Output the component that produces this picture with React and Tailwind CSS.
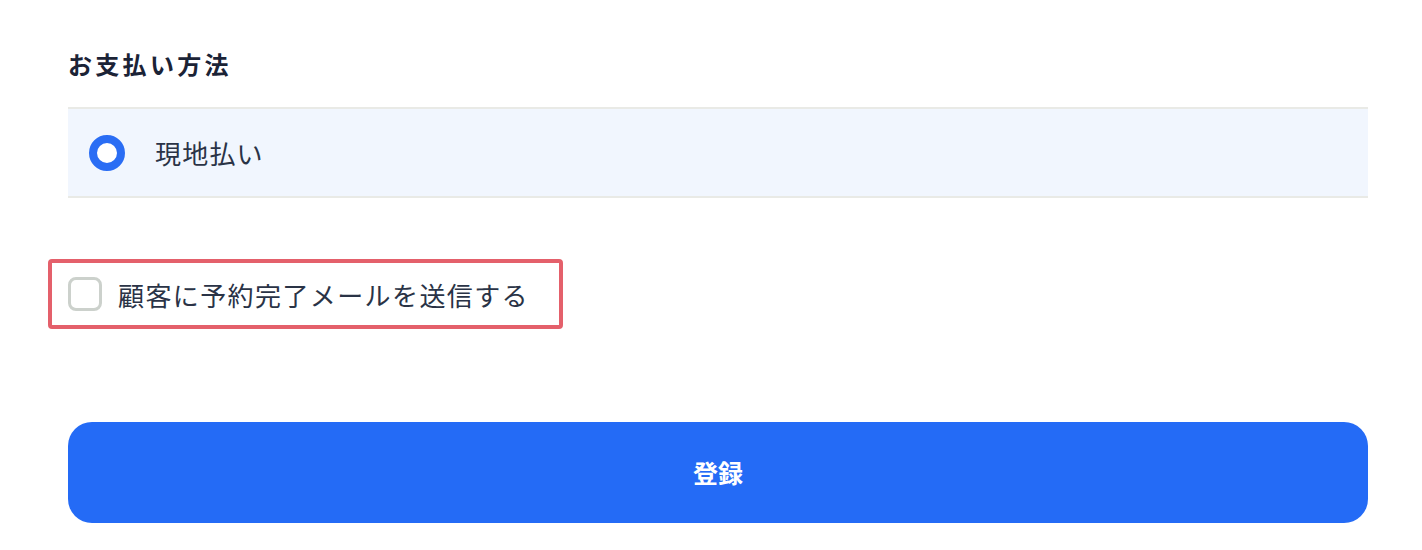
export default function App() {
  return (
    <div className="min-h-[550px] bg-white" style={{ fontFamily: '"Noto Sans CJK JP", "Noto Sans", sans-serif' }}>
      <div className="ml-[68px] w-[1300px] pt-[44px]">
        <h3 className="text-[24px] font-bold leading-[40px] tracking-[3.3px] text-[#1b2336]">お支払い方法</h3>
        <div className="mt-[23px] flex h-[91px] items-center border-y-2 border-[#e9eae6] bg-[#f1f6fe] pl-[21px]">
          <span className="size-[36px] rounded-full border-[8px] border-[#2a6df4] bg-white" />
          <span className="ml-[30px] text-[26px] tracking-[1.2px] text-[#2a3346]">現地払い</span>
        </div>
        <div className="mt-[61px] -ml-[20px] inline-flex h-[70px] w-[515px] items-center rounded-[4px] border-[4px] border-[#e4606b] pl-[16px]">
          <span className="size-[34px] rounded-[8px] border-[3px] border-[#ccd1cc] bg-white" />
          <span className="ml-[16px] text-[26px] tracking-[1.4px] text-[#2a3346]">顧客に予約完了メールを送信する</span>
        </div>
        <button className="mt-[93px] flex h-[101px] w-full items-center justify-center rounded-[24px] bg-[#246bf6] text-[25px] font-bold text-white">
          登録
        </button>
      </div>
    </div>
  );
}
